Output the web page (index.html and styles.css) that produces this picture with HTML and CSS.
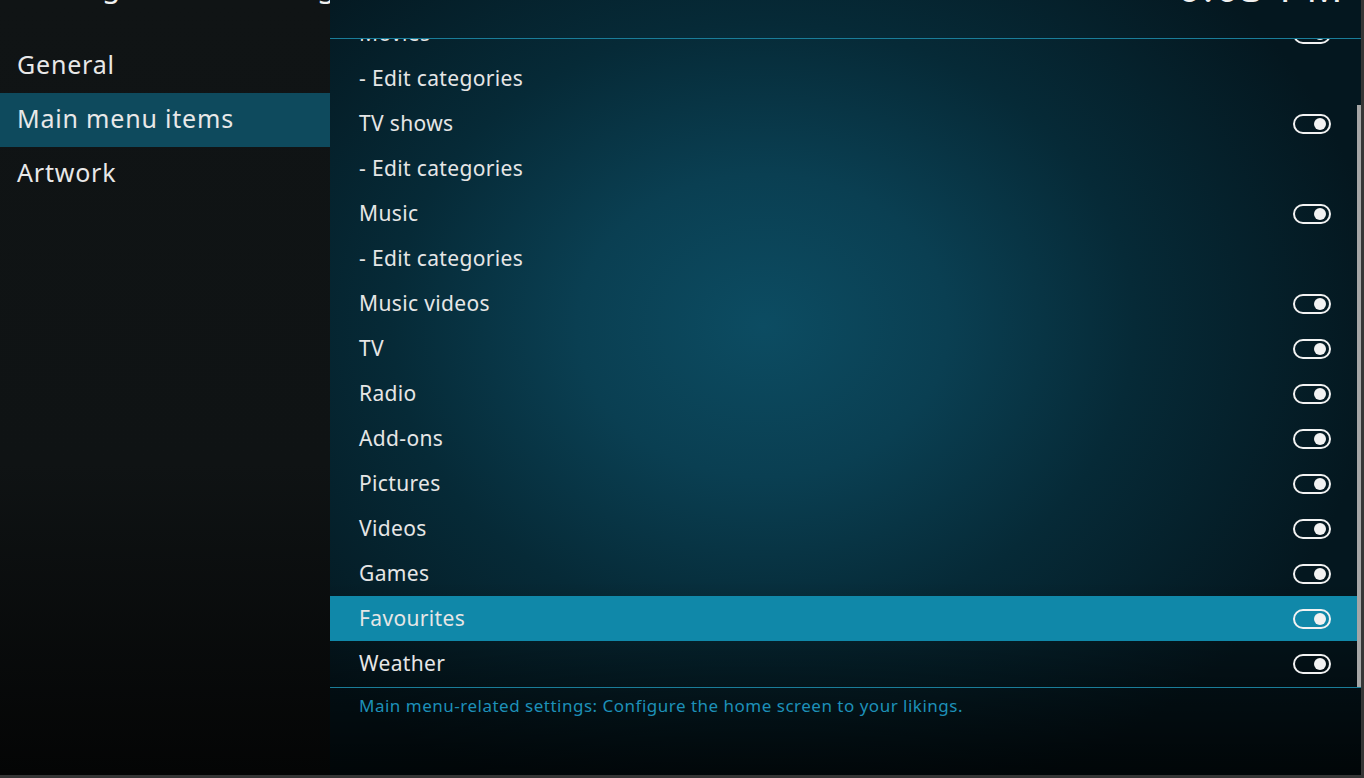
FILE: index.html
```html
<!DOCTYPE html>
<html lang="en">
<head>
<meta charset="utf-8">
<title>Skin settings</title>
<link rel="stylesheet" href="styles.css">
</head>
<body>
<div class="app">
  <aside class="sidebar">
    <div class="title"><span class="title-text">Settings / Skin settings</span></div>
    <nav class="menu">
      <div class="menu-item">General</div>
      <div class="menu-item active">Main menu items</div>
      <div class="menu-item">Artwork</div>
    </nav>
  </aside>
  <main class="main">
    <header class="main-header"><span class="clock">6:03 PM</span></header>
    <div class="list-wrap">
      <div class="list">
        <div class="row"><span>Movies</span><span class="toggle"></span></div>
        <div class="row"><span>- Edit categories</span></div>
        <div class="row"><span>TV shows</span><span class="toggle"></span></div>
        <div class="row"><span>- Edit categories</span></div>
        <div class="row"><span>Music</span><span class="toggle"></span></div>
        <div class="row"><span>- Edit categories</span></div>
        <div class="row"><span>Music videos</span><span class="toggle"></span></div>
        <div class="row"><span>TV</span><span class="toggle"></span></div>
        <div class="row"><span>Radio</span><span class="toggle"></span></div>
        <div class="row"><span>Add-ons</span><span class="toggle"></span></div>
        <div class="row"><span>Pictures</span><span class="toggle"></span></div>
        <div class="row"><span>Videos</span><span class="toggle"></span></div>
        <div class="row"><span>Games</span><span class="toggle"></span></div>
        <div class="row focused"><span>Favourites</span><span class="toggle"></span></div>
        <div class="row"><span>Weather</span><span class="toggle"></span></div>
      </div>
      <div class="scrollbar"><div class="thumb"></div></div>
    </div>
    <footer class="footer">Main menu-related settings: Configure the home screen to your likings.</footer>
  </main>
</div>
</body>
</html>
```

FILE: styles.css
```css
html, body {
  margin: 0;
  padding: 0;
}
body {
  width: 1364px;
  height: 778px;
  background: #363636;
  overflow: hidden;
  font-family: "Noto Sans", "Open Sans", sans-serif;
  color: #e4e4e4;
}
.app {
  display: flex;
  width: 1361px;
  height: 775px;
}
.sidebar {
  width: 330px;
  flex: none;
  background: linear-gradient(to bottom, #101415 0%, #0f1314 60%, #040505 100%);
  display: flex;
  flex-direction: column;
}
.title {
  height: 39px;
  overflow: hidden;
  padding-left: 17px;
}
.title-text {
  display: block;
  white-space: nowrap;
  font-size: 30px;
  line-height: 30px;
  letter-spacing: 0.6px;
  margin-top: -29px;
  color: #f0f0f0;
}
.menu-item {
  height: 54px;
  line-height: 51px;
  padding-left: 17px;
  font-size: 25px;
  letter-spacing: 0.8px;
  color: #e8e8e8;
}
.menu-item.active {
  background: #0e4a5d;
}
.main {
  flex: 1;
  display: flex;
  flex-direction: column;
  background:
    linear-gradient(to bottom, rgba(0,0,0,0) 0%, rgba(0,0,0,0) 75%, rgba(0,0,0,0.75) 100%),
    radial-gradient(ellipse 60% 65% at 42% 42%, #0c4c62 0%, #0a3f52 30%, #062a37 60%, #04171f 100%);
}
.main-header {
  height: 38px;
  border-bottom: 1px solid #1a7d99;
  overflow: hidden;
  display: flex;
  justify-content: flex-end;
  padding-right: 16px;
}
.clock {
  display: block;
  white-space: nowrap;
  font-size: 40px;
  line-height: 40px;
  letter-spacing: 2.5px;
  margin-top: -33px;
  color: #f0f0f0;
}
.list-wrap {
  height: 648px;
  overflow: hidden;
  display: flex;
}
.list {
  flex: 1;
  margin-top: -28px;
}
.row {
  box-sizing: border-box;
  height: 45px;
  display: flex;
  align-items: center;
  justify-content: space-between;
  padding: 0 26px 2px 29px;
  font-size: 21px;
  letter-spacing: 0.35px;
  color: #e6e6e6;
}
.row.focused {
  background: #1088a9;
}
.toggle {
  box-sizing: border-box;
  width: 38px;
  height: 20px;
  margin-top: 2px;
  border: 2px solid #f2f2f2;
  border-radius: 10px;
  display: flex;
  align-items: center;
  justify-content: flex-end;
  padding-right: 3px;
}
.toggle::after {
  content: "";
  width: 12px;
  height: 12px;
  border-radius: 50%;
  background: #f2f2f2;
}
.scrollbar {
  width: 4px;
  flex: none;
}
.thumb {
  margin-top: 66px;
  height: 582px;
  background: #a6a6a6;
}
.footer {
  flex: 1;
  border-top: 1px solid #1a7d99;
  padding: 7px 0 0 29px;
  font-size: 17px;
  line-height: 22px;
  letter-spacing: 0.5px;
  color: #1d90b8;
}
```
